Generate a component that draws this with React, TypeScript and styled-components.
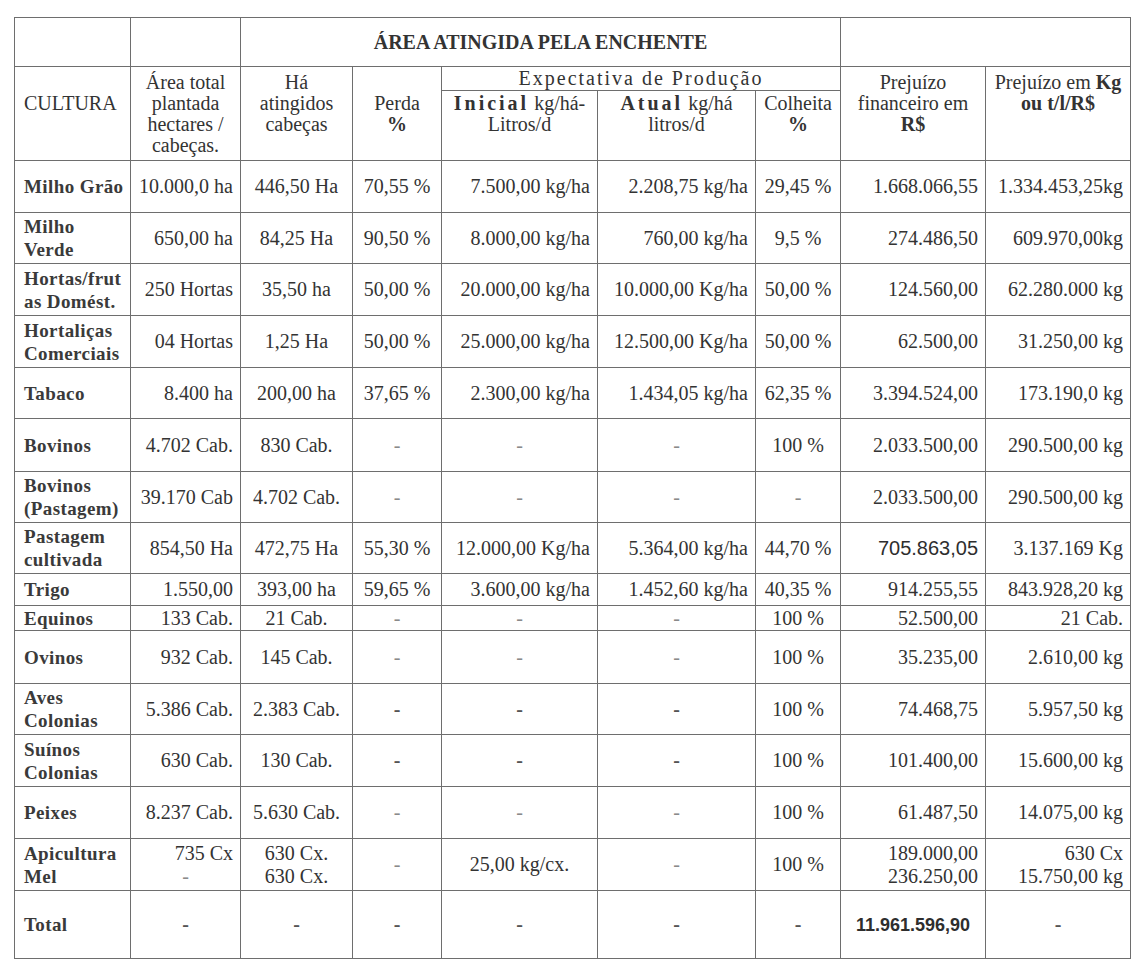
import React from "react";
import styled, { createGlobalStyle } from "styled-components";

const Global = createGlobalStyle`
  html, body {
    margin: 0;
    padding: 0;
    background: #ffffff;
  }
  body {
    font-family: "Liberation Serif", "Times New Roman", serif;
    color: #333333;
  }
`;

type Align = "left" | "center" | "right";

const Page = styled.div`
  padding: 17px 0 0 14px;
`;

const Sheet = styled.table`
  border-collapse: collapse;
  table-layout: fixed;
  width: 1116px;
  font-size: 20px;
  line-height: 21px;
`;

const Row = styled.tr<{ $h: number }>`
  height: ${(p) => p.$h}px;
`;

const HeadCell = styled.td<{ $align?: Align; $valign?: string; $pt?: number; $bold?: boolean; $spacing?: number }>`
  border: 1px solid #6e6e6e;
  padding: ${(p) => p.$pt ?? 0}px 4px 0 ${(p) => (p.$align === "left" ? 9 : 4)}px;
  text-align: ${(p) => p.$align ?? "center"};
  vertical-align: ${(p) => p.$valign ?? "top"};
  font-weight: ${(p) => (p.$bold ? 700 : 400)};
  letter-spacing: ${(p) => p.$spacing ?? 0}px;
  white-space: nowrap;
`;

const Cell = styled.td<{ $align?: Align }>`
  border: 1px solid #6e6e6e;
  padding: 0 7px 0 7px;
  text-align: ${(p) => p.$align ?? "right"};
  vertical-align: middle;
  white-space: pre;
  line-height: 23px;
`;

const Label = styled.td`
  border: 1px solid #6e6e6e;
  padding: 0 4px 0 9px;
  text-align: left;
  vertical-align: middle;
  font-size: 19px;
  font-weight: 700;
  letter-spacing: 0.4px;
  line-height: 23px;
  color: #3a3a3a;
  white-space: nowrap;
`;

const Spaced = styled.b`
  letter-spacing: 3px;
`;

const Line = styled.div<{ $align: Align }>`
  text-align: ${(p) => p.$align};
`;

const SansNum = styled.span<{ $bold?: boolean }>`
  font-family: "Liberation Sans", Arial, sans-serif;
  font-size: ${(p) => (p.$bold ? 18 : 20)}px;
  font-weight: ${(p) => (p.$bold ? 700 : 400)};
  color: #2e2e2e;
`;

const Dash = styled.span<{ $heavy?: boolean }>`
  color: ${(p) => (p.$heavy ? "#555" : "#8a8a8a")};
  font-weight: ${(p) => (p.$heavy ? 700 : 400)};
`;

const colWidths = [116, 110, 112, 89, 156, 158, 85, 145, 145];
const defaultAlign: Align[] = ["right", "center", "center", "right", "right", "center", "right", "right"];

type CellValue = string | React.ReactNode;

type DataRow = {
  label: React.ReactNode;
  h: number;
  cells: CellValue[];
  align?: Partial<Record<number, Align>>;
  heavyDash?: boolean;
};

const rows: DataRow[] = [
  {
    label: "Milho Grão",
    h: 52,
    cells: ["10.000,0 ha", "446,50 Ha", "70,55 %", "7.500,00 kg/ha", "2.208,75 kg/ha", "29,45 %", "1.668.066,55", "1.334.453,25kg"],
  },
  {
    label: <>Milho<br />Verde</>,
    h: 51,
    cells: ["650,00 ha", "84,25 Ha", "90,50 %", "8.000,00 kg/ha", "760,00 kg/ha", "9,5 %", "274.486,50", "609.970,00kg"],
  },
  {
    label: <>Hortas/frut<br />as Domést.</>,
    h: 52,
    cells: ["250 Hortas", "35,50 ha", "50,00 %", "20.000,00 kg/ha", "10.000,00 Kg/ha", "50,00 %", "124.560,00", "62.280.000 kg"],
  },
  {
    label: <>Hortaliças<br />Comerciais</>,
    h: 52,
    cells: ["04 Hortas", "1,25 Ha", "50,00 %", "25.000,00 kg/ha", "12.500,00 Kg/ha", "50,00 %", "62.500,00", "31.250,00 kg"],
  },
  {
    label: "Tabaco",
    h: 51,
    cells: ["8.400 ha", "200,00 ha", "37,65 %", "2.300,00 kg/ha", "1.434,05 kg/ha", "62,35 %", "3.394.524,00", "173.190,0 kg"],
  },
  {
    label: "Bovinos",
    h: 53,
    cells: ["4.702 Cab.", "830 Cab.", "-", "-", "-", "100 %", "2.033.500,00", "290.500,00 kg"],
  },
  {
    label: <>Bovinos<br />(Pastagem)</>,
    h: 51,
    cells: ["39.170 Cab", "4.702 Cab.", "-", "-", "-", "-", "2.033.500,00", "290.500,00 kg"],
  },
  {
    label: <>Pastagem<br />cultivada</>,
    h: 51,
    cells: [
      "854,50 Ha",
      "472,75 Ha",
      "55,30 %",
      "12.000,00 Kg/ha",
      "5.364,00 kg/ha",
      "44,70 %",
      <SansNum key="s">705.863,05</SansNum>,
      "3.137.169 Kg",
    ],
  },
  {
    label: "Trigo",
    h: 32,
    cells: ["1.550,00", "393,00 ha", "59,65 %", "3.600,00 kg/ha", "1.452,60 kg/ha", "40,35 %", "914.255,55", "843.928,20 kg"],
  },
  {
    label: "Equinos",
    h: 25,
    cells: ["133 Cab.", "21 Cab.", "-", "-", "-", "100 %", "52.500,00", "21 Cab."],
  },
  {
    label: "Ovinos",
    h: 53,
    cells: ["932 Cab.", "145 Cab.", "-", "-", "-", "100 %", "35.235,00", "2.610,00 kg"],
  },
  {
    label: <>Aves<br />Colonias</>,
    h: 51,
    heavyDash: true,
    cells: ["5.386 Cab.", "2.383 Cab.", "-", "-", "-", "100 %", "74.468,75", "5.957,50 kg"],
  },
  {
    label: <>Suínos<br />Colonias</>,
    h: 52,
    heavyDash: true,
    cells: ["630 Cab.", "130 Cab.", "-", "-", "-", "100 %", "101.400,00", "15.600,00 kg"],
  },
  {
    label: "Peixes",
    h: 52,
    cells: ["8.237 Cab.", "5.630 Cab.", "-", "-", "-", "100 %", "61.487,50", "14.075,00 kg"],
  },
  {
    label: <>Apicultura<br />Mel</>,
    h: 52,
    align: { 3: "center" },
    cells: [
      <React.Fragment key="a">
        <Line $align="right">735 Cx</Line>
        <Line $align="center"><Dash>-</Dash></Line>
      </React.Fragment>,
      "630 Cx.\n630 Cx.",
      "-",
      "25,00 kg/cx.",
      "-",
      "100 %",
      "189.000,00\n236.250,00",
      "630 Cx\n15.750,00 kg",
    ],
  },
  {
    label: "Total",
    h: 68,
    heavyDash: true,
    align: { 6: "center" },
    cells: ["-", "-", "-", "-", "-", "-", <SansNum key="t" $bold>11.961.596,90</SansNum>, "-"],
  },
];

export default function App() {
  return (
    <Page>
      <Global />
      <Sheet>
        <colgroup>
          {colWidths.map((w, i) => (
            <col key={i} style={{ width: w }} />
          ))}
        </colgroup>
        <thead>
          <Row $h={49}>
            <HeadCell />
            <HeadCell />
            <HeadCell colSpan={5} $valign="middle" $bold>
              ÁREA ATINGIDA PELA ENCHENTE
            </HeadCell>
            <HeadCell colSpan={2} />
          </Row>
          <Row $h={24}>
            <HeadCell rowSpan={2} $align="left" $pt={26}>
              CULTURA
            </HeadCell>
            <HeadCell rowSpan={2} $pt={5}>
              Área total
              <br />
              plantada
              <br />
              hectares /
              <br />
              cabeças.
            </HeadCell>
            <HeadCell rowSpan={2} $pt={5}>
              Há
              <br />
              atingidos
              <br />
              cabeças
            </HeadCell>
            <HeadCell rowSpan={2} $pt={26}>
              Perda
              <br />
              <b>%</b>
            </HeadCell>
            <HeadCell colSpan={3} $valign="middle" $spacing={2}>
              Expectativa de Produção
            </HeadCell>
            <HeadCell rowSpan={2} $pt={5}>
              Prejuízo
              <br />
              financeiro em
              <br />
              <b>R$</b>
            </HeadCell>
            <HeadCell rowSpan={2} $pt={5}>
              Prejuízo em <b>Kg</b>
              <br />
              <b>ou t/l/R$</b>
            </HeadCell>
          </Row>
          <Row $h={70}>
            <HeadCell $pt={2}>
              <Spaced>Inicial</Spaced> kg/há-
              <br />
              Litros/d
            </HeadCell>
            <HeadCell $pt={2}>
              <Spaced>Atual</Spaced> kg/há
              <br />
              litros/d
            </HeadCell>
            <HeadCell $pt={2}>
              Colheita
              <br />
              <b>%</b>
            </HeadCell>
          </Row>
        </thead>
        <tbody>
          {rows.map((r, ri) => (
            <Row key={ri} $h={r.h}>
              <Label>{r.label}</Label>
              {r.cells.map((c, ci) => {
                const isDash = c === "-";
                const align: Align = isDash ? "center" : r.align?.[ci] ?? defaultAlign[ci];
                return (
                  <Cell key={ci} $align={align}>
                    {isDash ? <Dash $heavy={r.heavyDash}>-</Dash> : c}
                  </Cell>
                );
              })}
            </Row>
          ))}
        </tbody>
      </Sheet>
    </Page>
  );
}
